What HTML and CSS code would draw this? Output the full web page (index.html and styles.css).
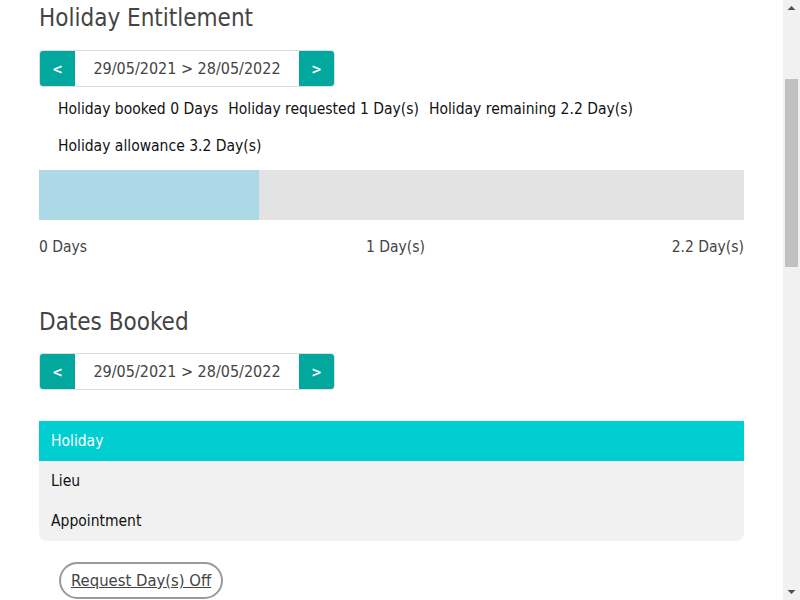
FILE: index.html
```html
<!DOCTYPE html>
<html lang="en">
<head>
<meta charset="utf-8">
<title>Holiday Entitlement</title>
<link rel="stylesheet" href="styles.css">
</head>
<body>
<div class="page">
  <section class="section entitlement">
    <h2 class="section-title">Holiday Entitlement</h2>
    <div class="date-nav">
      <button class="nav-btn" type="button">&lt;</button>
      <div class="nav-range">29/05/2021 &gt; 28/05/2022</div>
      <button class="nav-btn" type="button">&gt;</button>
    </div>
    <div class="stats">
      <span class="stat">Holiday booked 0 Days</span>
      <span class="stat">Holiday requested 1 Day(s)</span>
      <span class="stat">Holiday remaining 2.2 Day(s)</span>
      <span class="stat">Holiday allowance 3.2 Day(s)</span>
    </div>
    <div class="bar">
      <div class="bar-fill" style="width: 31.25%"></div>
    </div>
    <div class="bar-labels">
      <span class="label-start">0 Days</span>
      <span class="label-mid">1 Day(s)</span>
      <span class="label-end">2.2 Day(s)</span>
    </div>
  </section>

  <section class="section booked">
    <h2 class="section-title">Dates Booked</h2>
    <div class="date-nav">
      <button class="nav-btn" type="button">&lt;</button>
      <div class="nav-range">29/05/2021 &gt; 28/05/2022</div>
      <button class="nav-btn" type="button">&gt;</button>
    </div>
    <ul class="tabs">
      <li class="tab active">Holiday</li>
      <li class="tab">Lieu</li>
      <li class="tab">Appointment</li>
    </ul>
    <a class="request-btn" href="#">Request Day(s) Off</a>
  </section>
</div>

<div class="scrollbar" aria-hidden="true">
  <div class="sb-btn">
    <svg width="17" height="17" viewBox="0 0 17 17"><polygon points="4.5,10 8.5,6 12.5,10" fill="#505050"/></svg>
  </div>
  <div class="sb-track"><div class="sb-thumb"></div></div>
  <div class="sb-btn">
    <svg width="17" height="17" viewBox="0 0 17 17"><polygon points="4.5,7 12.5,7 8.5,11" fill="#505050"/></svg>
  </div>
</div>
</body>
</html>
```

FILE: styles.css
```css
html, body {
  margin: 0;
  padding: 0;
  background: #ffffff;
  overflow: hidden;
}

body {
  font-family: "DejaVu Sans Condensed", "DejaVu Sans", sans-serif;
  font-stretch: condensed;
  color: #111;
  font-size: 15.5px;
}

.page {
  padding: 3px 56px 40px 39px;
  box-sizing: border-box;
}

.scrollbar {
  position: fixed;
  top: 0;
  right: 0;
  width: 17px;
  height: 100vh;
  background: #f1f1f1;
  display: flex;
  flex-direction: column;
}

.sb-btn {
  height: 17px;
  flex: none;
}

.sb-btn svg {
  display: block;
}

.sb-track {
  flex: 1;
  padding: 62px 2px 0;
}

.sb-thumb {
  height: 188px;
  background: #c1c1c1;
}

.section-title {
  margin: 0;
  font-size: 24px;
  line-height: 30px;
  font-weight: normal;
  color: #444;
}

.date-nav {
  display: flex;
  width: 296px;
  height: 37px;
  box-sizing: border-box;
  border: 1px solid #dcdcdc;
  border-radius: 4px;
  overflow: hidden;
  margin-top: 17px;
}

.nav-btn {
  width: 35px;
  border: 0;
  padding: 0;
  background: #02a89e;
  color: #fff;
  font-family: inherit;
  font-weight: bold;
  font-size: 14px;
}

.nav-range {
  flex: 1;
  display: flex;
  align-items: center;
  justify-content: center;
  color: #444;
  font-size: 16px;
}

.stats {
  display: flex;
  flex-wrap: wrap;
  column-gap: 10px;
  padding-left: 19px;
  margin-top: 4px;
  line-height: 37px;
  color: #111;
}

.bar {
  margin-top: 5px;
  height: 50px;
  background: #e3e3e3;
}

.bar-fill {
  height: 100%;
  background: #add8e6;
}

.bar-labels {
  display: grid;
  grid-template-columns: 1fr 1fr 1fr;
  margin-top: 17px;
  line-height: 20px;
  color: #444;
}

.label-mid {
  text-align: center;
  padding-left: 8px;
}

.label-end {
  text-align: right;
}

.booked {
  margin-top: 50px;
}

.booked .date-nav {
  margin-top: 16px;
}

.tabs {
  list-style: none;
  margin: 31px 0 0;
  padding: 0;
  background: #f1f1f1;
  border-radius: 0 0 8px 8px;
  overflow: hidden;
}

.tab {
  height: 40px;
  line-height: 40px;
  padding-left: 12px;
  color: #111;
}

.tab.active {
  background: #00ced1;
  color: #fff;
}

.request-btn {
  display: inline-block;
  margin: 21px 0 0 20px;
  padding: 0 10px;
  height: 37px;
  line-height: 33px;
  box-sizing: border-box;
  border: 2px solid #9a9a9a;
  border-radius: 19px;
  color: #444;
  font-size: 16.5px;
  text-decoration: underline;
}
```
